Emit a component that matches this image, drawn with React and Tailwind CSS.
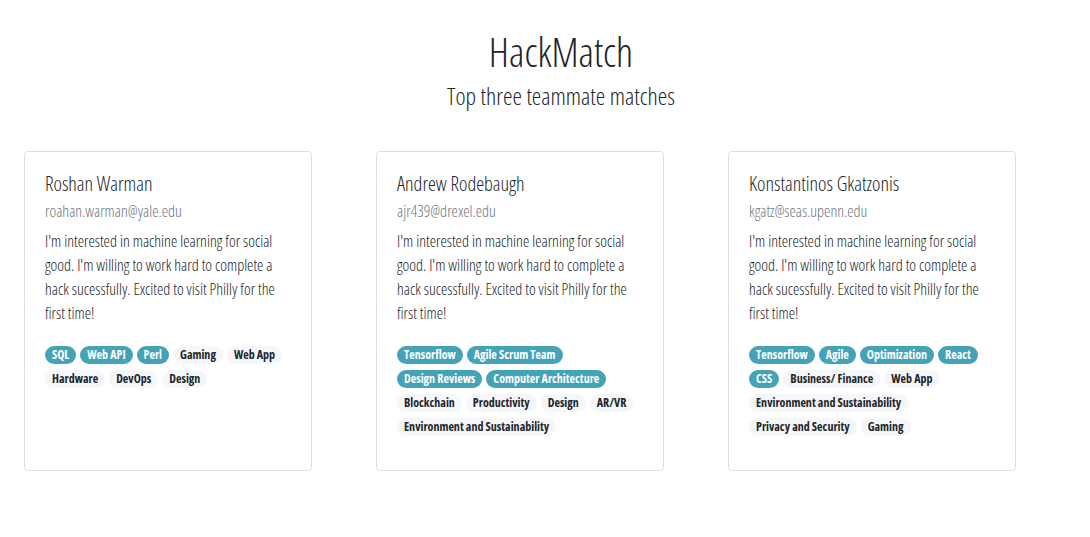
const people = [
  {
    name: "Roshan Warman",
    email: "roahan.warman@yale.edu",
    tags: [
      ["SQL", 1], ["Web API", 1], ["Perl", 1], ["Gaming", 0], ["Web App", 0],
      ["Hardware", 0], ["DevOps", 0], ["Design", 0],
    ],
  },
  {
    name: "Andrew Rodebaugh",
    email: "ajr439@drexel.edu",
    tags: [
      ["Tensorflow", 1], ["Agile Scrum Team", 1], ["Design Reviews", 1], ["Computer Architecture", 1],
      ["Blockchain", 0], ["Productivity", 0], ["Design", 0], ["AR/VR", 0],
      ["Environment and Sustainability", 0],
    ],
  },
  {
    name: "Konstantinos Gkatzonis",
    email: "kgatz@seas.upenn.edu",
    tags: [
      ["Tensorflow", 1], ["Agile", 1], ["Optimization", 1], ["React", 1], ["CSS", 1],
      ["Business/ Finance", 0], ["Web App", 0], ["Environment and Sustainability", 0],
      ["Privacy and Security", 0], ["Gaming", 0],
    ],
  },
];

function Card({ p }) {
  return (
    <div className="h-[320px] rounded-[4px] border border-[#dedede] bg-white px-5 pt-5">
      <div className="text-[20px] leading-[24px] text-[#212529]">{p.name}</div>
      <div className="mt-[3px] text-[16px] leading-6 text-[#6c757d]">{p.email}</div>
      <p className="mt-[6px] text-[16px] leading-6 text-[#212529]">
        I'm interested in machine learning for social good. I'm willing to work hard to complete a hack sucessfully. Excited to visit Philly for the first time!
      </p>
      <div className="mt-[21px] flex flex-wrap gap-x-1 gap-y-[6px]">
        {p.tags.map(([t, on]) => (
          <span
            key={t}
            className={
              "h-[18px] rounded-full px-[7px] text-[12px] leading-[18px] font-bold " +
              (on ? "bg-[#45a3b7] text-white" : "bg-[#f4f6f9] text-[#212529]")
            }
          >
            {t}
          </span>
        ))}
      </div>
    </div>
  );
}

export default function App() {
  return (
    <div className="min-h-[537px] bg-white font-[family-name:'Open_Sans',sans-serif] font-light [font-stretch:75%] text-[#212529]">
      <div className="pl-8 pt-[24px] text-center">
        <h1 className="text-[40px] leading-[56px]">HackMatch</h1>
        <h2 className="text-[24px] leading-[32px]">Top three teammate matches</h2>
      </div>
      <div className="mt-[39px] grid grid-cols-[288px_288px_288px] gap-x-16 pl-6">
        {people.map((p) => (
          <Card key={p.name} p={p} />
        ))}
      </div>
    </div>
  );
}
